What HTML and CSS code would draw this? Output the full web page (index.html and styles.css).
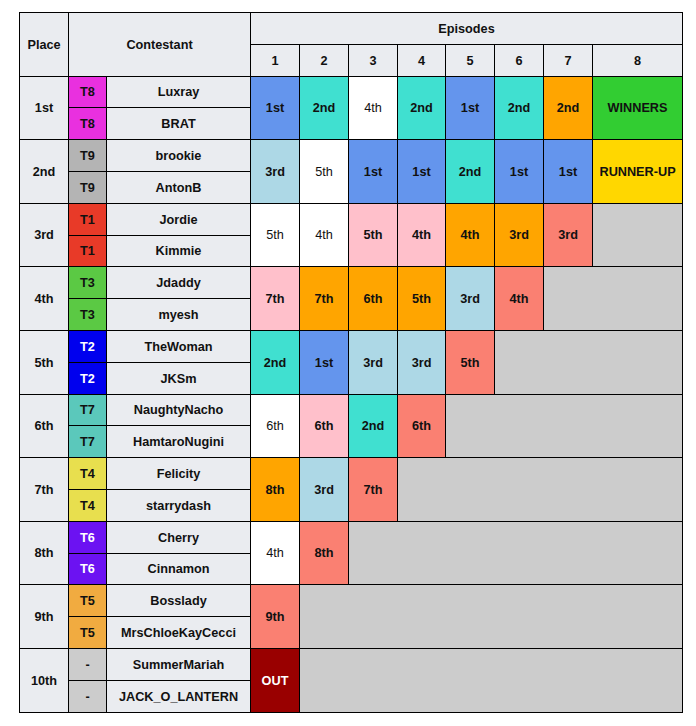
FILE: index.html
```html
<!DOCTYPE html>
<html>
<head>
<meta charset="utf-8">
<link rel="stylesheet" href="styles.css">
</head>
<body>
<table class="results">
  <colgroup>
    <col class="c-place"><col class="c-team"><col class="c-name">
    <col class="c-ep"><col class="c-ep"><col class="c-ep"><col class="c-ep4"><col class="c-ep"><col class="c-ep"><col class="c-ep"><col class="c-final">
  </colgroup>
  <thead>
    <tr class="hr">
      <th rowspan="2">Place</th>
      <th rowspan="2" colspan="2">Contestant</th>
      <th colspan="8">Episodes</th>
    </tr>
    <tr class="hr">
      <th>1</th><th>2</th><th>3</th><th>4</th><th>5</th><th>6</th><th>7</th><th>8</th>
    </tr>
  </thead>
  <tbody>
    <tr class="short"><th rowspan="2" class="place">1st</th><td class="team t8">T8</td><th class="name">Luxray</th>
      <td rowspan="2" class="r1">1st</td><td rowspan="2" class="r2">2nd</td><td rowspan="2" class="rw">4th</td><td rowspan="2" class="r2">2nd</td><td rowspan="2" class="r1">1st</td><td rowspan="2" class="r2">2nd</td><td rowspan="2" class="ro">2nd</td><td rowspan="2" class="win">WINNERS</td></tr>
    <tr><td class="team t8">T8</td><th class="name">BRAT</th></tr>

    <tr><th rowspan="2" class="place">2nd</th><td class="team t9">T9</td><th class="name">brookie</th>
      <td rowspan="2" class="r3">3rd</td><td rowspan="2" class="rw">5th</td><td rowspan="2" class="r1">1st</td><td rowspan="2" class="r1">1st</td><td rowspan="2" class="r2">2nd</td><td rowspan="2" class="r1">1st</td><td rowspan="2" class="r1">1st</td><td rowspan="2" class="run">RUNNER-UP</td></tr>
    <tr><td class="team t9">T9</td><th class="name">AntonB</th></tr>

    <tr><th rowspan="2" class="place">3rd</th><td class="team t1">T1</td><th class="name">Jordie</th>
      <td rowspan="2" class="rw">5th</td><td rowspan="2" class="rw">4th</td><td rowspan="2" class="rp">5th</td><td rowspan="2" class="rp">4th</td><td rowspan="2" class="ro">4th</td><td rowspan="2" class="ro">3rd</td><td rowspan="2" class="rs">3rd</td><td rowspan="2" class="gone"></td></tr>
    <tr class="short"><td class="team t1">T1</td><th class="name">Kimmie</th></tr>

    <tr><th rowspan="2" class="place">4th</th><td class="team t3">T3</td><th class="name">Jdaddy</th>
      <td rowspan="2" class="rp">7th</td><td rowspan="2" class="ro">7th</td><td rowspan="2" class="ro">6th</td><td rowspan="2" class="ro">5th</td><td rowspan="2" class="r3">3rd</td><td rowspan="2" class="rs">4th</td><td rowspan="2" colspan="2" class="gone"></td></tr>
    <tr><td class="team t3">T3</td><th class="name">myesh</th></tr>

    <tr><th rowspan="2" class="place">5th</th><td class="team t2">T2</td><th class="name">TheWoman</th>
      <td rowspan="2" class="r2">2nd</td><td rowspan="2" class="r1">1st</td><td rowspan="2" class="r3">3rd</td><td rowspan="2" class="r3">3rd</td><td rowspan="2" class="rs">5th</td><td rowspan="2" colspan="3" class="gone"></td></tr>
    <tr><td class="team t2">T2</td><th class="name">JKSm</th></tr>

    <tr class="short"><th rowspan="2" class="place">6th</th><td class="team t7">T7</td><th class="name">NaughtyNacho</th>
      <td rowspan="2" class="rw">6th</td><td rowspan="2" class="rp">6th</td><td rowspan="2" class="r2">2nd</td><td rowspan="2" class="rs">6th</td><td rowspan="2" colspan="4" class="gone"></td></tr>
    <tr><td class="team t7">T7</td><th class="name">HamtaroNugini</th></tr>

    <tr><th rowspan="2" class="place">7th</th><td class="team t4">T4</td><th class="name">Felicity</th>
      <td rowspan="2" class="ro">8th</td><td rowspan="2" class="r3">3rd</td><td rowspan="2" class="rs">7th</td><td rowspan="2" colspan="5" class="gone"></td></tr>
    <tr><td class="team t4">T4</td><th class="name">starrydash</th></tr>

    <tr><th rowspan="2" class="place">8th</th><td class="team t6">T6</td><th class="name">Cherry</th>
      <td rowspan="2" class="rw">4th</td><td rowspan="2" class="rs">8th</td><td rowspan="2" colspan="6" class="gone"></td></tr>
    <tr class="short"><td class="team t6">T6</td><th class="name">Cinnamon</th></tr>

    <tr><th rowspan="2" class="place">9th</th><td class="team t5">T5</td><th class="name">Bosslady</th>
      <td rowspan="2" class="rs">9th</td><td rowspan="2" colspan="7" class="gone"></td></tr>
    <tr><td class="team t5">T5</td><th class="name">MrsChloeKayCecci</th></tr>

    <tr><th rowspan="2" class="place">10th</th><td class="team tx">-</td><th class="name">SummerMariah</th>
      <td rowspan="2" class="out">OUT</td><td rowspan="2" colspan="7" class="gone"></td></tr>
    <tr><td class="team tx">-</td><th class="name">JACK_O_LANTERN</th></tr>
  </tbody>
</table>
</body>
</html>
```

FILE: styles.css
```css
html, body {
  margin: 0;
  background: #ffffff;
}
body {
  padding: 12px 0 0 19px;
  font-family: "Liberation Sans", Arial, sans-serif;
  font-size: 12.7px;
  color: #111;
}
.results {
  border-collapse: separate;
  border-spacing: 0;
  table-layout: fixed;
  width: 664px;
  border-top: 1px solid #000;
  border-left: 1px solid #000;
}
.c-place { width: 49px; }
.c-team { width: 38px; }
.c-name { width: 144px; }
.c-ep { width: 49px; }
.c-ep4 { width: 48px; }
.c-final { width: 90px; }

.results th,
.results td {
  border: 0;
  border-right: 1px solid #000;
  border-bottom: 1px solid #000;
  padding: 0;
  text-align: center;
  vertical-align: middle;
  font-weight: bold;
  white-space: nowrap;
  overflow: hidden;
}
.results th {
  background: #eaecf0;
}
.hr { height: 32px; }
tbody tr { height: 32px; }
tbody tr.short { height: 31px; }

.team { color: #111; }
.t8 { background: #e930df; }
.t9 { background: #b4b4b4; }
.t1 { background: #e83a28; }
.t3 { background: #5bc944; }
.t2 { background: #0000ee; color: #fff; }
.t7 { background: #5bc8bb; }
.t4 { background: #e8df4e; }
.t6 { background: #6c12f2; color: #fff; }
.t5 { background: #f1ab40; }
.tx { background: #cccccc; font-weight: normal; }

.r1 { background: #6495ed; }
.r2 { background: #40e0d0; }
.r3 { background: #add8e6; }
.rw { background: #ffffff; font-weight: normal !important; }
.rp { background: #ffc0cb; }
.ro { background: #ffa500; }
.rs { background: #fa8072; }
.win { background: #32cd32; }
.run { background: #ffd700; }
.out { background: #990000; color: #fff; }
.gone { background: #cccccc; }
```
